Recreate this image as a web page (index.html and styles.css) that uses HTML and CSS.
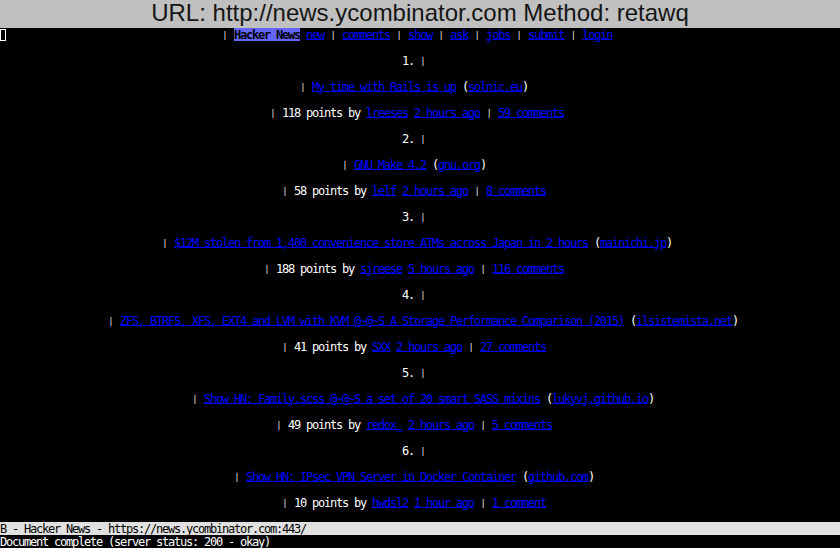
FILE: index.html
```
<!DOCTYPE html>
<html lang="en">
<head>
<meta charset="utf-8">
<title>retawq - Hacker News</title>
<link rel="stylesheet" href="styles.css">
</head>
<body>
<div class="urlbar">URL: http://news.ycombinator.com Method: retawq</div>
<div class="screen">
<span class="cursor"></span>
<div class="page">
<div class="row c37"><span class="bar">|</span> <span class="focus">Hacker News</span> <a href="#">new</a> <span class="bar">|</span> <a href="#">comments</a> <span class="bar">|</span> <a href="#">show</a> <span class="bar">|</span> <a href="#">ask</a> <span class="bar">|</span> <a href="#">jobs</a> <span class="bar">|</span> <a href="#">submit</a> <span class="bar">|</span> <a href="#">login</a></div>
<div class="row c67">1. <span class="bar">|</span></div>
<div class="row c50"><span class="bar">|</span> <a href="#">My time with Rails is up</a> (<a href="#">solnic.eu</a>)</div>
<div class="row c45"><span class="bar">|</span> 118 points by <a href="#">lreeses</a> <a href="#">2 hours ago</a> <span class="bar">|</span> <a href="#">59 comments</a></div>
<div class="row c67">2. <span class="bar">|</span></div>
<div class="row c57"><span class="bar">|</span> <a href="#">GNU Make 4.2</a> (<a href="#">gnu.org</a>)</div>
<div class="row c47"><span class="bar">|</span> 58 points by <a href="#">lelf</a> <a href="#">2 hours ago</a> <span class="bar">|</span> <a href="#">8 comments</a></div>
<div class="row c67">3. <span class="bar">|</span></div>
<div class="row c27"><span class="bar">|</span> <a href="#">$12M stolen from 1,400 convenience store ATMs across Japan in 2 hours</a> (<a href="#">mainichi.jp</a>)</div>
<div class="row c44"><span class="bar">|</span> 188 points by <a href="#">sjreese</a> <a href="#">5 hours ago</a> <span class="bar">|</span> <a href="#">116 comments</a></div>
<div class="row c67">4. <span class="bar">|</span></div>
<div class="row c18"><span class="bar">|</span> <a href="#">ZFS, BTRFS, XFS, EXT4 and LVM with KVM @~@~S A Storage Performance Comparison (2015)</a> (<a href="#">ilsistemista.net</a>)</div>
<div class="row c47"><span class="bar">|</span> 41 points by <a href="#">SXX</a> <a href="#">2 hours ago</a> <span class="bar">|</span> <a href="#">27 comments</a></div>
<div class="row c67">5. <span class="bar">|</span></div>
<div class="row c32"><span class="bar">|</span> <a href="#">Show HN: Family.scss @~@~S a set of 20 smart SASS mixins</a> (<a href="#">lukyvj.github.io</a>)</div>
<div class="row c46"><span class="bar">|</span> 49 points by <a href="#">redox_</a> <a href="#">2 hours ago</a> <span class="bar">|</span> <a href="#">5 comments</a></div>
<div class="row c67">6. <span class="bar">|</span></div>
<div class="row c39"><span class="bar">|</span> <a href="#">Show HN: IPsec VPN Server in Docker Container</a> (<a href="#">github.com</a>)</div>
<div class="row c47"><span class="bar">|</span> 10 points by <a href="#">hwdsl2</a> <a href="#">1 hour ago</a> <span class="bar">|</span> <a href="#">1 comment</a></div>
</div>
<div class="row status">B - Hacker News - https://news.ycombinator.com:443/</div>
<div class="row message">Document complete (server status: 200 - okay)</div>
</div>
</body>
</html>
```
FILE: styles.css
```
html, body {
  margin: 0;
  background: #000;
}

body {
  width: 840px;
  height: 548px;
  overflow: hidden;
  display: flex;
  flex-direction: column;
}

.urlbar {
  flex: none;
  height: 28px;
  background: #c0c0c0;
  color: #161616;
  font: 24px/25px "Liberation Sans", Arial, sans-serif;
  text-align: center;
  white-space: nowrap;
}

.screen {
  flex: 1;
  position: relative;
  display: flex;
  flex-direction: column;
  font-family: "DejaVu Sans Mono", monospace;
  font-size: 12px;
  line-height: 15px;
  letter-spacing: -1.2246px;
  color: #ffffff;
}

.page {
  flex: 1;
  display: flex;
  flex-direction: column;
  gap: 13px;
}

.row {
  height: 13px;
  white-space: pre;
}

a {
  color: #0000ff;
  text-decoration: underline;
  text-decoration-thickness: 1px;
  text-underline-offset: 0;
}

.bar {
  display: inline-block;
  width: 6px;
  height: 13px;
  vertical-align: top;
  text-align: center;
  font-size: 8px;
  line-height: 15px;
  letter-spacing: 0;
  color: #ffffff;
}

.focus {
  display: inline-block;
  height: 13px;
  overflow: hidden;
  vertical-align: top;
  background: #6464ff;
  color: #000;
  font-weight: bold;
}

.cursor {
  position: absolute;
  left: 0;
  top: 1px;
  width: 6px;
  height: 12px;
  box-sizing: border-box;
  border: 1px solid #ffffff;
}

.status {
  background: #e0e0e0;
  color: #000;
  overflow: hidden;
}

.c18 { padding-left: 108px; }
.c27 { padding-left: 162px; }
.c32 { padding-left: 192px; }
.c37 { padding-left: 222px; }
.c39 { padding-left: 234px; }
.c44 { padding-left: 264px; }
.c45 { padding-left: 270px; }
.c46 { padding-left: 276px; }
.c47 { padding-left: 282px; }
.c50 { padding-left: 300px; }
.c57 { padding-left: 342px; }
.c67 { padding-left: 402px; }
```
